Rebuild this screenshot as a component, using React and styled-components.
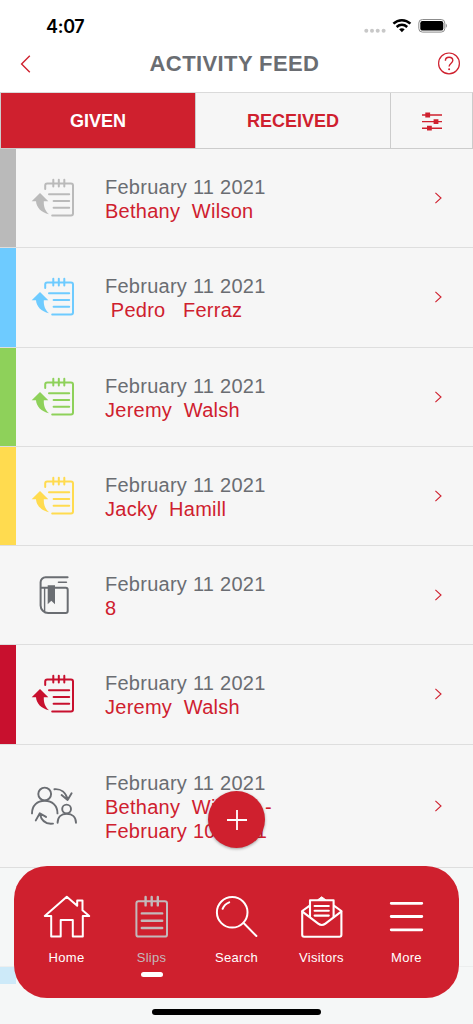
import React, { Component } from "react";
import styled, { createGlobalStyle } from "styled-components";

const RED = "#cf202e";
const GREY = "#6a6d72";

const GlobalStyle = createGlobalStyle`
* { box-sizing: border-box; }
body {
  margin: 0;
  font-family: "Liberation Sans", Arial, sans-serif;
  background-color: #ffffff;
}
button {
  font-family: inherit;
  border: 0;
  padding: 0;
  background: none;
}
`;

const Screen = styled.div`
position: relative;
display: flex;
flex-direction: column;
width: 473px;
height: 1024px;
overflow: hidden;
background-color: #f5f6f6;
`;

const StatusBar = styled.div`
display: flex;
justify-content: space-between;
align-items: center;
height: 44px;
padding: 8px 26px 0 46px;
background-color: #ffffff;
flex-shrink: 0;
`;

const Clock = styled.div`
font-family: Inter, sans-serif;
font-size: 18px;
font-weight: 600;
letter-spacing: -0.3px;
color: #000000;
`;

const Header = styled.div`
display: flex;
justify-content: space-between;
align-items: center;
height: 48px;
padding: 0 12px 8px 14px;
background-color: #ffffff;
flex-shrink: 0;
`;

const Title = styled.div`
font-size: 22px;
font-weight: bold;
letter-spacing: 0.4px;
line-height: 26px;
margin-right: 6px;
color: ${GREY};
`;

const HeaderButton = styled.button`
display: flex;
justify-content: center;
width: 24px;
`;

const Tabs = styled.div`
display: flex;
height: 57px;
border: 1px solid #cccccc;
border-top-color: #dadada;
flex-shrink: 0;
`;

const Tab = styled.button`
display: flex;
align-items: center;
justify-content: center;
width: ${props => props.$width}px;
padding-top: 2px;
border-right: ${props => (props.$last ? "0" : "1px solid #cccccc")};
font-size: 18px;
font-weight: bold;
color: ${props => (props.$active ? "#ffffff" : RED)};
background-color: ${props => (props.$active ? RED : "#f6f6f6")};
`;

const Feed = styled.div`
display: flex;
flex-direction: column;
`;

const Row = styled.div`
display: flex;
align-items: stretch;
height: ${props => (props.$tall ? 123 : 99.25)}px;
border-bottom: 1px solid #dedede;
background-color: #f6f6f6;
flex-shrink: 0;
`;

const ColorBar = styled.div`
width: 16px;
background-color: ${props => props.$color || "transparent"};
`;

const RowIcon = styled.div`
display: flex;
align-items: center;
width: 89px;
padding-left: 15px;
color: ${props => props.$color};
`;

const RowText = styled.div`
display: flex;
flex-direction: column;
justify-content: center;
flex: 1;
padding-top: 2px;
font-size: 20px;
line-height: 24px;
letter-spacing: 0.26px;
white-space: pre;
`;

const DateText = styled.div`
color: ${GREY};
`;

const NameText = styled.div`
color: ${RED};
`;

const RowChevron = styled.div`
display: flex;
align-items: center;
width: 39px;
`;

const AddButton = styled.button`
position: absolute;
left: 208px;
top: 791px;
display: flex;
align-items: center;
justify-content: center;
width: 57px;
height: 57px;
border-radius: 50%;
background-color: ${RED};
box-shadow: 0 1px 3px rgba(0, 0, 0, 0.35);
`;

const NavBar = styled.div`
position: absolute;
left: 14px;
top: 865.5px;
display: flex;
width: 445px;
height: 132.5px;
padding: 27.5px 10px 0;
border-radius: 33px;
background-color: ${RED};
`;

const NavItem = styled.button`
display: flex;
flex-direction: column;
align-items: center;
justify-content: flex-start;
flex: 1;
font-size: 13px;
letter-spacing: 0.3px;
color: ${props => (props.$active ? "#c3b9bb" : "#ffffff")};
`;

const NavLabel = styled.div`
margin-top: 11px;
line-height: 16px;
`;

const NavMarker = styled.div`
width: 22px;
height: 5px;
margin-top: 6px;
border-radius: 3px;
background-color: #ffffff;
`;

const HomeIndicator = styled.div`
position: absolute;
left: 152px;
top: 1008.5px;
width: 169px;
height: 6px;
border-radius: 3px;
background-color: #000000;
`;

// rows that are fading out behind the navigation bar
const FadedRow = styled.div`
height: ${props => props.$height}px;
border-bottom: 1px solid #eceeee;
background-color: #f5f7f7;
flex-shrink: 0;
`;

const FadedBar = styled.div`
width: 16px;
height: 17px;
background-color: #cdeaf9;
`;

const Svg = ({ w, h, sw = 2, children }) => (
    <svg width={w} height={h} viewBox={`0 0 ${w} ${h}`} fill="none" stroke="currentColor" strokeWidth={sw} strokeLinecap="round" strokeLinejoin="round">
        {children}
    </svg>
);

const SlipIcon = () => (
    <Svg w={46} h={40} sw={2}>
        <path d="M14.2 11V7.4a2 2 0 0 1 2-2H40a2 2 0 0 1 2 2V35.6a2 2 0 0 1-2 2H21.2" />
        <path d="M22.3 1.8v6.8M27.8 1.8v6.8M33.3 1.8v6.8" />
        <path d="M18 16.3H38.2M22.6 23H38.2M22.6 29.7H38.2" />
        <path d="M9 15L17.3 23.3H12.8C12.6 28.5 14 33 18 36.2C10.2 34.6 5.4 29.4 5 23.3H0.7Z" fill="currentColor" stroke="none" />
    </Svg>
);

const BookIcon = () => (
    <Svg w={46} h={40} sw={2}>
        <path d="M36.6 2.3H14.6a5 5 0 0 0-5 5V30.4a7.6 7.6 0 0 0 7.6 7.6H34.7a2 2 0 0 0 2-2V14.7a2 2 0 0 0-2-2H9.8" />
        <path d="M13.6 12.7V36.4" strokeWidth="1.4" />
        <path d="M27.5 7.2H35.4" strokeWidth="1.6" />
        <path d="M16.7 10.3H24V29.3L20.3 25.8L16.7 29.3Z" fill="currentColor" stroke="none" />
    </Svg>
);

const PeopleIcon = () => (
    <Svg w={48} h={40} sw={1.9}>
        <circle cx="13.7" cy="8" r="6.4" />
        <path d="M1 27.4C1 19.5 6.2 14.8 13.7 14.8S26.5 19.5 26.5 27.4" />
        <circle cx="35.6" cy="23" r="4.4" />
        <path d="M26.6 36.8C26.6 31 30.2 27.7 35.7 27.7S45 31 45 36.8" />
        <path d="M23.4 3.2C30 2.6 35 6.5 36.6 13.6M30.6 9L36.6 14L40.6 7.3" />
        <path d="M22 37.6C15.5 38.4 10.5 35 8.8 27.8M4.8 34.4L8.8 27.3L15 30.9" />
    </Svg>
);

const HomeIcon = () => (
    <Svg w={48} h={46} sw={2}>
        <path d="M1.8 23L23.8 3.8L34.2 12.8V7.5H39.5V17.3L46.2 23H39.8V43.6H29.8V27H17.7V43.6H8.2V23Z" />
    </Svg>
);

const NotepadIcon = () => (
    <Svg w={48} h={46} sw={2}>
        <rect x="8.4" y="8.2" width="30.6" height="35.4" rx="2.2" />
        <path d="M17.6 4v8.4M23.7 4v8.4M29.8 4v8.4" strokeWidth="2.4" />
        <path d="M13.8 20.4H34.2M13.8 27.7H34.2M13.8 35H34.2" strokeWidth="2.4" />
    </Svg>
);

const SearchIcon = () => (
    <Svg w={48} h={46} sw={2}>
        <circle cx="19.2" cy="19.3" r="15.3" />
        <path d="M30.6 30L43.4 43" />
        <path d="M9.6 15.8Q11.4 11.2 16.2 9.4" />
    </Svg>
);

const VisitorsIcon = () => (
    <Svg w={48} h={46} sw={2.1}>
        <path d="M11.4 12.8L4.2 18V41.8a1.9 1.9 0 0 0 1.9 1.9H41.5a1.9 1.9 0 0 0 1.9-1.9V18L36.2 12.8" />
        <path d="M4.4 18.6L20.2 30.6Q23.8 33.4 27.4 30.6L43.2 18.6" />
        <path d="M12 24V7.2H35.6V24" />
        <path d="M20 6.6L23.7 3.8L27.4 6.6Z" fill="currentColor" strokeWidth="1" />
        <path d="M16.6 13H30.8M16.6 17.8H30.8M16.6 22.6H30.8" />
    </Svg>
);

const MoreIcon = () => (
    <Svg w={48} h={46} sw={2.8}>
        <path d="M8.2 10.3H38.8M8.2 23.5H38.8M8.2 36.8H38.8" />
    </Svg>
);

const StatusIcons = () => (
    <svg width="84" height="16" viewBox="0 0 84 16">
        <g fill="#c8c8c8">
            <circle cx="3.3" cy="12.7" r="2" />
            <circle cx="9" cy="12.7" r="2" />
            <circle cx="14.7" cy="12.7" r="2" />
            <circle cx="20.6" cy="12.7" r="2" />
        </g>
        <g fill="none" stroke="#000000" strokeWidth="2.5">
            <path d="M30.4 5.6C35.4 1 42.4 1 47.4 5.6" />
            <path d="M33.6 9C36.8 6.1 41 6.1 44.2 9" />
        </g>
        <path d="M36.1 11.2C37.7 9.8 40.1 9.8 41.7 11.2L38.9 14.2Z" />
        <rect x="55.8" y="1.5" width="26" height="12.6" rx="3.6" fill="none" stroke="#8c8c8c" strokeWidth="1" />
        <rect x="57.3" y="3" width="23" height="9.6" rx="2.2" />
        <path d="M82.8 5.8C84.2 6.2 84.2 9.4 82.8 9.8Z" fill="#8c8c8c" />
    </svg>
);

const FilterIcon = () => (
    <svg width="20" height="20" viewBox="0 0 20 20">
        <path d="M0 3H20M0 9.6H20M0 16.2H20" stroke={RED} strokeWidth="1.4" />
        <path d="M3.3 0.6h4.8v4.8H3.3zM11.6 7.2h4.8v4.8h-4.8zM5 13.8h4.8v4.8H5z" fill={RED} />
    </svg>
);

const entries = [
    { color: "#bababa", name: "Bethany  Wilson" },
    { color: "#6ecbff", name: " Pedro   Ferraz" },
    { color: "#8ed15a", name: "Jeremy  Walsh" },
    { color: "#ffdb4f", name: "Jacky  Hamill" },
    { icon: BookIcon, name: "8" },
    { color: "#c8102e", name: "Jeremy  Walsh" },
    { icon: PeopleIcon, name: "Bethany  Wilson  -\nFebruary 10 2021", tall: true }
];

const navItems = [
    { label: "Home", icon: HomeIcon },
    { label: "Slips", icon: NotepadIcon },
    { label: "Search", icon: SearchIcon },
    { label: "Visitors", icon: VisitorsIcon },
    { label: "More", icon: MoreIcon }
];

class ActivityFeed extends Component {
    constructor(){
        super();
        this.state = {
            tab: "GIVEN",
            page: "Slips"
        };
    }

    onTabChange(tab){
        this.setState({ tab });
    }

    onPageChange(page){
        this.setState({ page });
    }

    render() {
        const rows = entries.map((entry, i) => {
            const Icon = entry.icon || SlipIcon;
            return (
                <Row key={i} $tall={entry.tall}>
                    <ColorBar $color={entry.color}/>
                    <RowIcon $color={entry.color || GREY}><Icon/></RowIcon>
                    <RowText>
                        <DateText>February 11 2021</DateText>
                        <NameText>{entry.name}</NameText>
                    </RowText>
                    <RowChevron>
                        <svg width="8" height="12" viewBox="0 0 8 12" fill="none" stroke={RED} strokeWidth="1.1">
                            <path d="M1.4 0.8L7 6L1.4 11.2" />
                        </svg>
                    </RowChevron>
                </Row>
            );
        });

        return (
            <Screen>
                <GlobalStyle/>
                <StatusBar>
                    <Clock>4:07</Clock>
                    <StatusIcons/>
                </StatusBar>
                <Header>
                    <HeaderButton aria-label="Back">
                        <svg width="12" height="18" viewBox="0 0 12 18" fill="none" stroke={RED} strokeWidth="1.4">
                            <path d="M9.8 0.8L1.6 9L9.8 17.2" />
                        </svg>
                    </HeaderButton>
                    <Title>ACTIVITY FEED</Title>
                    <HeaderButton aria-label="Help">
                        <svg width="24" height="24" viewBox="0 0 24 24" fill="none" stroke={RED} strokeWidth="1.2">
                            <circle cx="12" cy="11.4" r="10.4" />
                            <path d="M8.4 8.8C8.4 6.6 10 5.3 12.1 5.3S15.8 6.6 15.8 8.6C15.8 11.2 12.1 11.3 12.1 14.6" strokeWidth="1.4" />
                            <circle cx="12.1" cy="17.3" r="1" fill={RED} stroke="none" />
                        </svg>
                    </HeaderButton>
                </Header>
                <Tabs>
                    <Tab $width={195} $active={this.state.tab === "GIVEN"} onClick={this.onTabChange.bind(this, "GIVEN")}>GIVEN</Tab>
                    <Tab $width={195} $active={this.state.tab === "RECEIVED"} onClick={this.onTabChange.bind(this, "RECEIVED")}>RECEIVED</Tab>
                    <Tab $width={81} $last aria-label="Filter"><FilterIcon/></Tab>
                </Tabs>
                <Feed>
                    {rows}
                    <FadedRow $height={99.4}/>
                    <FadedRow $height={99.4}><FadedBar/></FadedRow>
                </Feed>
                <AddButton aria-label="Add">
                    <svg width="22" height="22" viewBox="0 0 22 22" stroke="#ffffff" strokeWidth="1.8">
                        <path d="M11 1V21M1 11H21" />
                    </svg>
                </AddButton>
                <NavBar>
                    {navItems.map(({ label, icon: Icon }) => (
                        <NavItem key={label} $active={this.state.page === label} onClick={this.onPageChange.bind(this, label)}>
                            <Icon/>
                            <NavLabel>{label}</NavLabel>
                            {this.state.page === label && <NavMarker/>}
                        </NavItem>
                    ))}
                </NavBar>
                <HomeIndicator/>
            </Screen>
        );
    }
}

export default ActivityFeed;
